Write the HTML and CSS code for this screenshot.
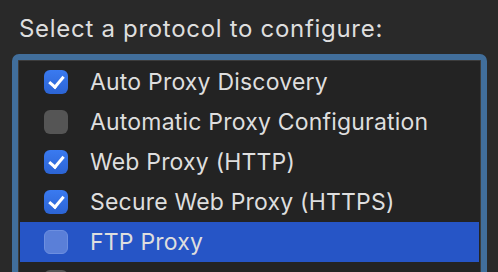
FILE: index.html
```html
<!DOCTYPE html>
<html lang="en">
  <head>
    <meta charset="UTF-8" />
    <title>Proxies</title>
    <link rel="stylesheet" href="styles.css">
  </head>
  <body>
    <div class="panel">
      <p class="prompt">Select a protocol to configure:</p>

      <ul class="protocol-list">
        <li class="protocol">
          <span class="check checked"></span>
          <span class="label">Auto Proxy Discovery</span>
        </li>
        <li class="protocol">
          <span class="check"></span>
          <span class="label">Automatic Proxy Configuration</span>
        </li>
        <li class="protocol">
          <span class="check checked"></span>
          <span class="label">Web Proxy (HTTP)</span>
        </li>
        <li class="protocol">
          <span class="check checked"></span>
          <span class="label">Secure Web Proxy (HTTPS)</span>
        </li>
        <li class="protocol selected">
          <span class="check"></span>
          <span class="label">FTP Proxy</span>
        </li>
        <li class="protocol">
          <span class="check"></span>
          <span class="label">SOCKS Proxy</span>
        </li>
      </ul>
    </div>
  </body>
</html>
```

FILE: styles.css
```css
* {
  margin: 0;
  padding: 0;
  box-sizing: border-box;
}

body {
  font-family: Inter, "Noto Sans", sans-serif;
  color: #dedede;
  background-color: #292929;
  overflow: hidden;
}

.panel {
  padding: 14px 0 0 18px;
  width: 481px;
}

.prompt {
  font-size: 24px;
  line-height: 30px;
  letter-spacing: 0.7px;
  padding-left: 1px;
  margin-bottom: 16px;
}

.protocol-list {
  list-style: none;
  background: #232323;
  border: 1px solid #3c3c3c;
  outline: 6px solid #416e9b;
  border-radius: 1px;
  padding: 1px;
  height: 240px;
}

.protocol {
  display: flex;
  align-items: center;
  height: 40px;
  padding-left: 24px;
  gap: 22px;
}

.protocol.selected {
  background: #2655c6;
}

.check {
  width: 24px;
  height: 24px;
  border-radius: 6px;
  background: #555555;
  flex-shrink: 0;
  position: relative;
}

.check.checked {
  background: linear-gradient(#3a7af0, #2c64d4);
}

.check.checked::after {
  content: "";
  position: absolute;
  left: 8px;
  top: 3px;
  width: 6px;
  height: 12px;
  border: solid #ffffff;
  border-width: 0 3px 3px 0;
  transform: rotate(40deg);
}

.selected .check {
  background: #5a7fd8;
  border: 1px solid #6d8fe0;
}

.label {
  font-size: 23px;
  letter-spacing: 0.2px;
}
```
